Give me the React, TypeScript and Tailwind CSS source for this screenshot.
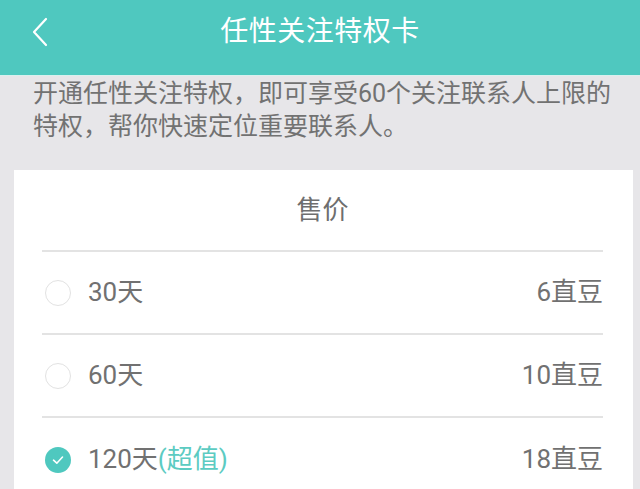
import React from 'react';

const font = '[font-family:Roboto,"Noto_Sans_CJK_SC",sans-serif]';

const options = [
  { days: '30天', price: '6直豆', checked: false, tag: '' },
  { days: '60天', price: '10直豆', checked: false, tag: '' },
  { days: '120天', price: '18直豆', checked: true, tag: '(超值)' },
];

function Radio({ checked }: { checked: boolean }) {
  if (checked) {
    return (
      <span className="flex h-[26px] w-[26px] items-center justify-center rounded-full bg-[#4fc8bf]">
        <svg width="14" height="14" viewBox="0 0 14 14" fill="none">
          <path d="M2.5 7.2 L5.8 10.2 L11.5 4" stroke="#fff" strokeWidth="1.6" strokeLinecap="round" strokeLinejoin="round" />
        </svg>
      </span>
    );
  }
  return <span className="block h-[26px] w-[26px] rounded-full border border-[#e2e2e2] bg-white" />;
}

export default function App() {
  return (
    <div className={`h-[489px] w-[640px] overflow-hidden bg-[#e7e6e9] ${font}`}>
      <header className="relative flex h-[76px] items-center justify-center bg-[#4fc8bf] border-b border-[#d9f0ee]">
        <svg className="absolute left-[31px] top-[17px]" width="18" height="30" viewBox="0 0 18 30" fill="none">
          <path d="M15 2 L3 15 L15 28" stroke="#fff" strokeWidth="2.2" strokeLinecap="round" strokeLinejoin="round" />
        </svg>
        <h1 className="-mt-[12px] text-[28px] leading-none tracking-[0.5px] text-white">任性关注特权卡</h1>
      </header>

      <p className="pl-[33px] pt-[1px] text-[25px] leading-[33px] whitespace-nowrap text-[#727272]">
        开通任性关注特权，即可享受60个关注联系人上限的
        <br />
        特权，帮你快速定位重要联系人。
      </p>

      <section className="ml-[14px] mr-[7px] mt-[27px] bg-white pl-[28px] pr-[30px]">
        <div className="flex h-[82px] items-center justify-center border-b-2 border-[#e3e3e3] text-[26px] text-[#6e6e6e]">
          售价
        </div>
        {options.map((o, i) => (
          <div
            key={o.days}
            className={`flex h-[83px] items-center justify-between text-[26px] text-[#717171] ${i < options.length - 1 ? 'border-b-2 border-[#e3e3e3]' : ''}`}
          >
            <div className="flex items-center gap-[17px] pl-[3px]">
              <Radio checked={o.checked} />
              <span>
                {o.days}
                {o.tag && <span className="text-[#5ccbc2]">{o.tag}</span>}
              </span>
            </div>
            <span>{o.price}</span>
          </div>
        ))}
      </section>
    </div>
  );
}
